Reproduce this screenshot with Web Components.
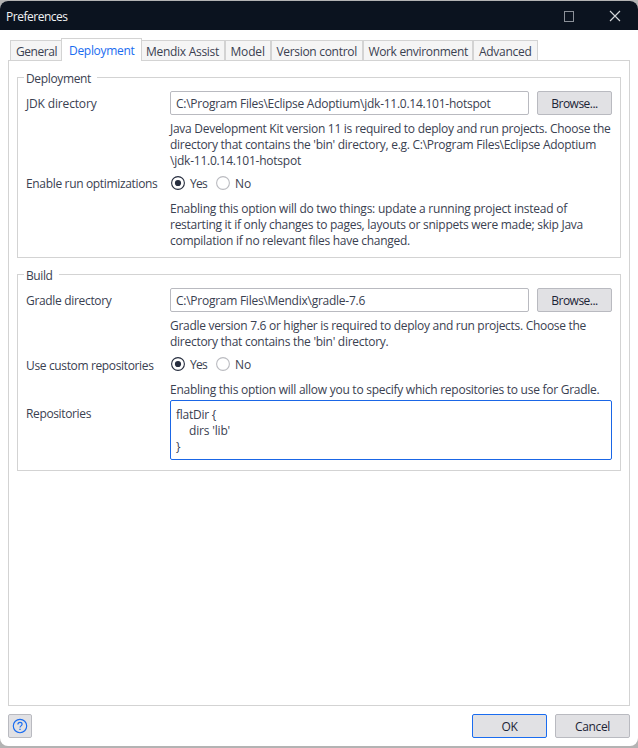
<!DOCTYPE html>
<html lang="en">
<head>
<meta charset="utf-8">
<title>Preferences</title>
<style>
html,body{margin:0;height:100%;overflow:hidden}
body{background:#b3b3b3;font:12px/16px "Open Sans","Noto Sans",sans-serif;color:#3a4151}
</style>
</head>
<body>
<pref-window></pref-window>
<script>
const define = (name, html, setup) => customElements.define(name, class extends HTMLElement {
  connectedCallback() {
    if (this.shadowRoot) return;
    this.attachShadow({mode: 'open'}).innerHTML = html;
    if (setup) setup.call(this, this.shadowRoot);
  }
});

/* One line of text, tracked so that it fills the width in its "w" attribute. */
define('fit-text', `<style>:host{display:block;white-space:pre;height:16px;line-height:18px}span{display:inline-block}</style><span><slot></slot></span>`, function (root) {
  const span = root.querySelector('span');
  const target = parseFloat(this.getAttribute('w'));
  const chars = this.textContent.length;
  const natural = span.getBoundingClientRect().width;
  if (target && natural) {
    const gap = (target - natural) / chars;
    span.style.letterSpacing = gap.toFixed(4) + 'px';
    this.style.width = target + 'px';
  }
});

define('title-bar', `<style>
:host{display:flex;align-items:center;height:29px;background:#0b131f;color:#f0f1f3;padding-left:6px}
fit-text{flex:1}
.max{width:8px;height:9px;border:1px solid #8b9098;margin-right:35px;margin-top:1px}
svg{width:12px;height:12px;margin-right:17px;margin-top:1px}
</style><fit-text w="61.5">Preferences</fit-text><div class="max"></div>
<svg viewBox="0 0 12 12"><path d="M1 1 11 11M11 1 1 11" stroke="#d3d5d8" stroke-width="1.15" fill="none"/></svg>`);

define('tab-item', `<style>
:host{display:block;box-sizing:border-box;height:20px;padding:2px 0 0 5px;background:#f5f5f5;border:1px solid #d3d3d3;border-bottom:0}
:host([active]){height:23px;background:#fff;color:#1a6cf0;padding:3px 0 0 7px;margin:0 0 -1px -1px;position:relative;z-index:1}
</style><slot></slot>`);

define('tab-strip', `<style>:host{display:flex;align-items:flex-end;height:22px;padding-left:2px}</style><slot></slot>`);

define('group-box', `<style>
:host{display:block;box-sizing:border-box;border:1px solid #d3d3d3;padding:0 8px}
.legend{width:max-content;height:16px;margin:-8px 0 0 -2px;padding:0 6px 0 2px;background:#fff}
.body{display:grid;grid-template-columns:144px 1fr;padding-top:5px;align-items:start}
</style><div class="legend"><slot name="legend"></slot></div><div class="body"><slot></slot></div>`);

define('path-field', `<style>
:host{display:flex;gap:8px;height:24px}
.in{box-sizing:border-box;width:359px;border:1px solid #b9bac0;border-radius:2px;padding:3px 5px;background:#fff}
</style><div class="in"><slot></slot></div><push-button><fit-text w="46.5">Browse...</fit-text></push-button>`);

define('push-button', `<style>
:host{display:flex;box-sizing:border-box;width:75px;height:24px;border:1px solid #b9bac0;border-radius:2px;background:#e1e1e4;align-items:center;justify-content:center;color:#1c2436}
:host([primary]){border-color:#1a6cf0}
:host([icon]){width:24px;padding:0}
</style><slot></slot>`);

define('radio-pair', `<style>
:host{display:flex;align-items:center;height:16px;padding-left:1px}
svg{width:14px;height:14px;display:block;margin-right:5px}
fit-text{margin-right:9px}
</style><svg viewBox="0 0 14 14"><circle cx="7" cy="7" r="6.4" fill="#fff" stroke="#262d3e" stroke-width="1.1"/><circle cx="7" cy="7" r="3.1" fill="#262d3e"/></svg><fit-text w="17">Yes</fit-text>
<svg viewBox="0 0 14 14"><circle cx="7" cy="7" r="6.4" fill="#fff" stroke="#babbc0" stroke-width="1.1"/></svg><fit-text w="16">No</fit-text>`);

define('code-area', `<style>:host{display:block;box-sizing:border-box;width:442px;height:60px;border:1px solid #1a66e6;border-radius:2px;padding:5px}</style><slot></slot>`);

define('pref-window', `<style>
:host{display:flex;flex-direction:column;box-sizing:border-box;margin-top:1px;height:745px;background:#fff;border-radius:8px;overflow:hidden}
main{display:flex;flex-direction:column;padding:8px 8px 0}
.panel{box-sizing:border-box;height:646px;border:1px solid #d3d3d3;padding:16px 8px 0}
footer{display:flex;gap:8px;padding:8px 8px 0}
.help{margin-right:auto}
.help svg{width:16px;height:16px}
.a{height:181px;margin-bottom:16px}
.b{height:197px}
.lab{padding-top:4px}
</style>
<title-bar></title-bar>
<main>
<tab-strip>
<tab-item style="width:52px"><fit-text w="41">General</fit-text></tab-item>
<tab-item active style="width:81px"><fit-text w="65.5">Deployment</fit-text></tab-item>
<tab-item style="width:83px;border-left:0;padding-left:4px"><fit-text w="73">Mendix Assist</fit-text></tab-item>
<tab-item style="width:46px;padding-left:4.4px"><fit-text w="34.5">Model</fit-text></tab-item>
<tab-item style="width:92px;padding-left:4.4px"><fit-text w="80.5">Version control</fit-text></tab-item>
<tab-item style="width:110px;padding-left:4.4px"><fit-text w="99.5">Work environment</fit-text></tab-item>
<tab-item style="width:65px"><fit-text w="52.5">Advanced</fit-text></tab-item>
</tab-strip>
<div class="panel">
<group-box class="a"><fit-text slot="legend" w="65">Deployment</fit-text>
<fit-text class="lab" w="70.5">JDK directory</fit-text>
<path-field><fit-text w="314.5">C:\\Program Files\\Eclipse Adoptium\\jdk-11.0.14.101-hotspot</fit-text></path-field>
<i></i><div style="padding-top:5px"><fit-text w="440.5">Java Development Kit version 11 is required to deploy and run projects. Choose the</fit-text><fit-text w="426">directory that contains the 'bin' directory, e.g. C:\\Program Files\\Eclipse Adoptium</fit-text><fit-text w="131">\\jdk-11.0.14.101-hotspot</fit-text></div>
<fit-text style="margin-top:7px" w="131.5">Enable run optimizations</fit-text><radio-pair style="margin-top:7px"></radio-pair>
<i></i><div style="padding-top:9px"><fit-text w="397">Enabling this option will do two things: update a running project instead of</fit-text><fit-text w="413">restarting it if only changes to pages, layouts or snippets were made; skip Java</fit-text><fit-text w="240">compilation if no relevant files have changed.</fit-text></div>
</group-box>
<group-box class="b"><fit-text slot="legend" w="26.5">Build</fit-text>
<fit-text class="lab" w="85.5">Gradle directory</fit-text>
<path-field><fit-text w="189">C:\\Program Files\\Mendix\\gradle-7.6</fit-text></path-field>
<i></i><div style="padding-top:5px"><fit-text w="416">Gradle version 7.6 or higher is required to deploy and run projects. Choose the</fit-text><fit-text w="218.5">directory that contains the 'bin' directory.</fit-text></div>
<fit-text style="margin-top:8px" w="127.5">Use custom repositories</fit-text><radio-pair style="margin-top:7px"></radio-pair>
<i></i><fit-text style="margin-top:8px" w="429.5">Enabling this option will allow you to specify which repositories to use for Gradle.</fit-text>
<fit-text style="margin-top:8px" w="65">Repositories</fit-text><code-area style="margin-top:3px"><fit-text w="40">flatDir {</fit-text><fit-text style="margin-left:13px" w="41">dirs 'lib'</fit-text><fit-text>}</fit-text></code-area>
</group-box>
</div>
</main>
<footer>
<push-button icon class="help"><svg width="16" height="16" viewBox="0 0 16 16" fill="none" stroke="#1a6cf0" stroke-width="1.15"><circle cx="8" cy="8" r="6.7"/><path d="M5.9 6.5C5.9 5.2 6.8 4.4 8 4.4s2.1.8 2.1 1.9c0 1.6-2.1 1.6-2.1 3.2"/><path d="M8 10.7v1.2" stroke-width="1.3"/></svg></push-button>
<push-button primary><fit-text w="16">OK</fit-text></push-button>
<push-button><fit-text w="35">Cancel</fit-text></push-button>
</footer>`);
</script>
</body>
</html>
